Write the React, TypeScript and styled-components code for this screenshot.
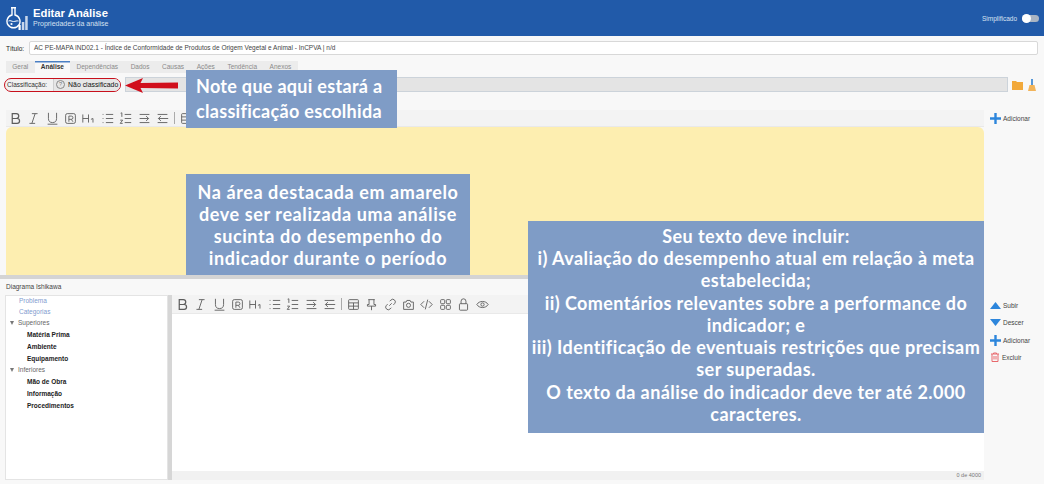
import React from "react";
import styled, { createGlobalStyle } from "styled-components";

const GlobalStyle = createGlobalStyle`
  html, body { margin: 0; padding: 0; background: #f8f8f8; }
  body { font-family: "Liberation Sans", Arial, sans-serif; overflow: hidden; }
`;

const Page = styled.div`
  position: relative;
  width: 1044px;
  height: 484px;
  overflow: hidden;
  background: #f8f8f8;
  color: #333;
`;

const Header = styled.header`
  height: 36px;
  background: #215aa9;
  display: flex;
  align-items: center;
  padding: 0 5px 0 6px;
  box-sizing: border-box;
`;

const HeaderTitles = styled.div`
  margin-left: 5px;
  flex: 1;
  color: #fff;
`;

const HeaderTitle = styled.div`
  font-size: 11.3px;
  line-height: 12px;
  font-weight: bold;
`;

const HeaderSubtitle = styled.div`
  font-size: 7px;
  line-height: 10px;
  color: #d5e0f0;
`;

const SimpleLabel = styled.span`
  color: #d9e3f2;
  font-size: 6.5px;
  margin-right: 5px;
`;

const Toggle = styled.span`
  position: relative;
  display: block;
  width: 17px;
  height: 7px;
  border-radius: 4px;
  background: #a9b4c3;
  &::after {
    content: "";
    position: absolute;
    left: 0;
    top: -1px;
    width: 9px;
    height: 9px;
    border-radius: 50%;
    background: #fff;
  }
`;

const TitleRow = styled.div`
  display: flex;
  align-items: center;
  height: 14px;
  margin: 5px 6px 0 6px;
`;

const TitleLabel = styled.span`
  font-size: 6.5px;
  width: 23px;
  color: #222;
`;

const TitleInput = styled.div`
  flex: 1;
  height: 14px;
  box-sizing: border-box;
  background: #fff;
  border: 1px solid #d8d8d8;
  border-radius: 2px;
  font-size: 6.5px;
  line-height: 12px;
  padding-left: 4px;
  color: #444;
  white-space: nowrap;
`;

const Tabs = styled.div`
  display: flex;
  height: 12px;
  margin: 6px 0 0 6px;
  width: fit-content;
  background: #ececec;
`;

const Tab = styled.span<{ $active?: boolean }>`
  flex: none;
  font-size: 6.5px;
  line-height: 12px;
  padding: 0 6.3px;
  color: ${({ $active }) => ($active ? "#333" : "#8a8a8a")};
  font-weight: ${({ $active }) => ($active ? "bold" : "normal")};
  background: ${({ $active }) => ($active ? "#f8f8f8" : "transparent")};
  box-shadow: ${({ $active }) => ($active ? "inset 0 1.5px 0 #4a7fc4" : "none")};
`;

const ClassRow = styled.div`
  display: flex;
  align-items: center;
  height: 15px;
  margin: 4px 8px 0 4px;
`;

const ClassPill = styled.div`
  display: flex;
  align-items: center;
  height: 14px;
  box-sizing: border-box;
  width: 117px;
  flex: none;
  background: #f1f1f1;
  border: 1.7px solid #c8101c;
  border-radius: 8px;
  font-size: 6.5px;
  padding-left: 2px;
`;

const ClassValue = styled.span`
  display: flex;
  align-items: center;
  gap: 3px;
  margin-left: 6px;
  padding-left: 2px;
  height: 100%;
  background: #e6e6e6;
  border-left: 1px solid #d0d0d0;
  flex: 1;
  border-radius: 0 7px 7px 0;
  color: #111;
  font-size: 6.9px;
  white-space: nowrap;
`;

const HelpMark = styled.span`
  width: 7px;
  height: 7px;
  border-radius: 50%;
  border: 1px solid #888;
  font-size: 5.5px;
  line-height: 7px;
  text-align: center;
  color: #777;
`;

const ClassField = styled.div`
  flex: 1;
  height: 15px;
  box-sizing: border-box;
  margin-left: 4px;
  background: #e4e4e4;
  border: 1px solid #ccd3da;
`;

const ClassIcons = styled.div`
  display: flex;
  align-items: center;
  gap: 5px;
  margin-left: 4px;
`;

const EditorRow = styled.div`
  display: flex;
  margin: 0 0 0 6px;
`;

const EditorColumn = styled.div`
  width: 978px;
  margin-top: 18px;
`;

const ToolbarBar = styled.div<{ $height: number; $pad: number }>`
  display: flex;
  align-items: center;
  height: ${({ $height }) => $height}px;
  padding-left: ${({ $pad }) => $pad}px;
  background: #f3f3f3;
  border-bottom: 1px solid #e9e9e9;
  box-sizing: border-box;
  color: #555;
`;

const ToolButton = styled.span`
  width: 18.45px;
  display: flex;
  justify-content: center;
  align-items: center;
  flex: none;
`;

const ToolSep = styled.span`
  width: 1px;
  height: 12px;
  margin: 0 2px;
  background: #aaa;
  flex: none;
`;

const YellowArea = styled.div`
  height: 148px;
  background: #fdeeb0;
  border-radius: 6px 6px 0 0;
`;

const SideActions = styled.div<{ $gap: number; $top: number }>`
  display: flex;
  flex-direction: column;
  gap: ${({ $gap }) => $gap}px;
  padding: ${({ $top }) => $top}px 0 0 6px;
`;

const SideAction = styled.div`
  display: flex;
  align-items: center;
  gap: 2px;
  font-size: 6.5px;
  height: 11px;
  color: #444;
`;

const Splitter = styled.div`
  height: 4px;
  margin-right: 60px;
  background: #d4d4d4;
`;

const DiagramLabel = styled.div`
  font-size: 6.5px;
  line-height: 8px;
  margin: 4px 0 0 6px;
  height: 8px;
  color: #444;
`;

const DiagramRow = styled.div`
  display: flex;
  margin: 4px 0 0 5px;
  height: 185px;
`;

const TreePanel = styled.div`
  width: 163px;
  flex: none;
  background: #fff;
  box-shadow: inset 0 0 0 1px #e4e4e4;
  box-sizing: border-box;
`;

const TreeItem = styled.div<{ $kind: "link" | "group" | "leaf" }>`
  display: flex;
  align-items: center;
  height: ${({ $kind }) => ($kind === "leaf" ? 12 : 11)}px;
  font-size: 6.5px;
  padding-left: ${({ $kind }) => ($kind === "leaf" ? 22 : $kind === "link" ? 14 : 5)}px;
  color: ${({ $kind }) => ($kind === "link" ? "#7f9dcf" : $kind === "leaf" ? "#222" : "#666")};
  font-weight: ${({ $kind }) => ($kind === "leaf" ? "bold" : "normal")};
`;

const TreeCaret = styled.span`
  width: 0;
  height: 0;
  margin-right: 4px;
  border-left: 2.5px solid transparent;
  border-right: 2.5px solid transparent;
  border-top: 4px solid #777;
`;

const Divider = styled.div`
  width: 4px;
  flex: none;
  background: #d6d6d6;
`;

const DiagramEditor = styled.div`
  width: 812px;
  flex: none;
  display: flex;
  flex-direction: column;
  background: #fff;
`;

const EditorBody = styled.div`
  flex: 1;
`;

const Counter = styled.div`
  height: 9px;
  background: #f1f1f1;
  font-size: 5.5px;
  line-height: 9px;
  text-align: right;
  padding-right: 3px;
  color: #777;
`;

const Callout = styled.div<{
  $x: number;
  $y: number;
  $w: number;
  $h: number;
  $line: number;
  $spacing: number;
  $shift?: number;
}>`
  position: absolute;
  left: ${({ $x }) => $x}px;
  top: ${({ $y }) => $y}px;
  width: ${({ $w }) => $w}px;
  height: ${({ $h }) => $h}px;
  box-sizing: border-box;
  padding-bottom: ${({ $shift }) => $shift ?? 0}px;
  background: #7f9cc6;
  color: #fff;
  font-family: Lato, sans-serif;
  font-weight: 700;
  font-size: 18px;
  line-height: ${({ $line }) => $line}px;
  letter-spacing: ${({ $spacing }) => $spacing}px;
  display: flex;
  flex-direction: column;
  justify-content: center;
`;

const CenterLine = styled.div`
  text-align: center;
  white-space: nowrap;
`;

const LeftLine = styled.div`
  padding-left: 10px;
  white-space: nowrap;
`;

const ArrowOverlay = styled.svg`
  position: absolute;
  left: 124px;
  top: 77px;
`;

const Stroke = ({ children }: { children: React.ReactNode }) => (
  <svg width="13" height="13" viewBox="0 0 16 16" fill="none" stroke="#5c5c5c" strokeWidth="1.1">
    {children}
  </svg>
);

const toolIcons: React.ReactNode[] = [
  <path key="b" d="M4 2h5a3 3 0 0 1 0 6H4zM4 8h6a3 3 0 0 1 0 6H4z" strokeWidth="1.5" />,
  <path key="i" d="M6 2h7M3 14h7M10 2 6 14" />,
  <path key="u" d="M3 1v7a5 5 0 0 0 10 0V1M2 15h12" />,
  <g key="r"><rect x="2" y="2" width="12" height="12" rx="2" /><path d="M6 12V5h3a2 2 0 0 1 0 4H6M9 9l2 3" /></g>,
  <path key="h" d="M1 3v10M8 3v10M1 8h7M11 9l2.500-1v5" />,
  <path key="ul" d="M6 3h9M6 8h9M6 13h9M2 3h1M2 8h1M2 13h1" />,
  <path key="ol" d="M7 3h8M7 8h8M7 13h8M2 1.500 3.500 1v5M1.500 10h3l-3 4h3" />,
  <path key="in" d="M2 3h12M2 13h12M2 8h11M10 5l3 3-3 3" />,
  <path key="out" d="M2 3h12M2 13h12M3 8h12M6 5 3 8l3 3" />,
];

const moreIcons: React.ReactNode[] = [
  <g key="t"><rect x="2" y="2" width="12" height="12" rx="1" /><path d="M2 6h12M8 6v8M2 10h12" /></g>,
  <path key="pin" d="M4 2h8M5 2v6H3v2h10V8h-2V2M8 10v5" />,
  <path key="link" d="M6.500 9.500l3-3M7 4l1.500-1.500a3 3 0 0 1 4.500 4.500L11.500 8.500M9 12l-1.500 1.500a3 3 0 0 1-4.500-4.500L4.500 7.500" />,
  <g key="cam"><path d="M2 5h3l1-2h4l1 2h3v9H2z" /><circle cx="8" cy="9" r="2.500" /></g>,
  <path key="code" d="M5 4 1 8l4 4M11 4l4 4-4 4M9.500 2l-3 12" />,
  <g key="grid"><rect x="2" y="2" width="5" height="5" rx="1" /><rect x="9" y="2" width="5" height="5" rx="1" /><rect x="2" y="9" width="5" height="5" rx="1" /><rect x="9" y="9" width="5" height="5" rx="1" /></g>,
  <g key="lock"><rect x="3" y="7" width="10" height="8" rx="1" /><path d="M5 7V4a3 3 0 0 1 6 0v3" /></g>,
  <g key="eye"><path d="M1 8c3-5 11-5 14 0-3 5-11 5-14 0z" /><circle cx="8" cy="8" r="2" /></g>,
];

const AddIcon = () => (
  <svg width="11" height="11" viewBox="0 0 11 11">
    <path d="M4.300 0h2.400v4.300H11v2.400H6.700V11H4.300V6.700H0V4.300h4.300z" fill="#2d86dc" />
  </svg>
);

const UpIcon = ({ down }: { down?: boolean }) => (
  <svg width="11" height="7" viewBox="0 0 11 7">
    <path d={down ? "M0 0h11L5.500 7z" : "M0 7h11L5.500 0z"} fill="#2d86dc" />
  </svg>
);

const TrashIcon = () => (
  <svg width="10" height="10" viewBox="0 0 10 10" fill="none" stroke="#e8686c" strokeWidth="1">
    <path d="M1 2h8M3.500 2V1h3v1M2 2v7.500h6V2M4 4v3.500M6 4v3.500" />
  </svg>
);

const Logo = () => (
  <svg width="22" height="23" viewBox="0 0 22 23" fill="none">
    <path d="M5 .700h5M6 .700v7.300a6.500 6.500 0 1 0 3 0V.700" stroke="#fff" strokeWidth="1.400" />
    <path d="M2.500 14c2-1 3 .5 5 .5s3-1 5-.5" stroke="#fff" strokeWidth="1" />
    <circle cx="5.500" cy="17" r="1.100" fill="#fff" />
    <rect x="12.500" y="18" width="2.200" height="5" fill="#fff" />
    <rect x="15.800" y="15" width="2.500" height="8" fill="#c9d7ec" />
    <rect x="19.200" y="9" width="2.500" height="14" fill="#c9d7ec" />
  </svg>
);

function Toolbar({ height, pad, full }: { height: number; pad: number; full?: boolean }) {
  return (
    <ToolbarBar $height={height} $pad={pad}>
      {toolIcons.map((icon, i) => (
        <ToolButton key={i}>
          <Stroke>{icon}</Stroke>
        </ToolButton>
      ))}
      <ToolSep />
      {moreIcons.slice(0, full ? moreIcons.length : 1).map((icon, i) => (
        <ToolButton key={i}>
          <Stroke>{icon}</Stroke>
        </ToolButton>
      ))}
    </ToolbarBar>
  );
}

const tabs = ["Geral", "Análise", "Dependências", "Dados", "Causas", "Ações", "Tendência", "Anexos"];

export default function App() {
  return (
    <Page>
      <GlobalStyle />
      <Header>
        <Logo />
        <HeaderTitles>
          <HeaderTitle>Editar Análise</HeaderTitle>
          <HeaderSubtitle>Propriedades da análise</HeaderSubtitle>
        </HeaderTitles>
        <SimpleLabel>Simplificado</SimpleLabel>
        <Toggle />
      </Header>

      <TitleRow>
        <TitleLabel>Título:</TitleLabel>
        <TitleInput>AC PE-MAPA IND02.1 - Índice de Conformidade de Produtos de Origem Vegetal e Animal - InCPVA | n/d</TitleInput>
      </TitleRow>

      <Tabs>
        {tabs.map((t) => (
          <Tab key={t} $active={t === "Análise"}>{t}</Tab>
        ))}
      </Tabs>

      <ClassRow>
        <ClassPill>
          Classificação:
          <ClassValue>
            <HelpMark>?</HelpMark>
            Não classificado
          </ClassValue>
        </ClassPill>
        <ClassField />
        <ClassIcons>
          <svg width="11" height="10" viewBox="0 0 11 10">
            <path d="M0 1h4l1 1h6v8H0z" fill="#f2a93b" />
          </svg>
          <svg width="8" height="12" viewBox="0 0 8 12">
            <rect x="3.200" y="0" width="1.600" height="6" fill="#2d7fd0" />
            <path d="M1.500 6h5L8 12H0z" fill="#f2b45a" />
          </svg>
        </ClassIcons>
      </ClassRow>

      <EditorRow>
        <EditorColumn>
          <Toolbar height={17} pad={0} />
          <YellowArea />
        </EditorColumn>
        <SideActions $gap={0} $top={21}>
          <SideAction>
            <AddIcon />
            Adicionar
          </SideAction>
        </SideActions>
      </EditorRow>

      <Splitter />
      <DiagramLabel>Diagrama Ishikawa</DiagramLabel>

      <DiagramRow>
        <TreePanel>
          <TreeItem $kind="link">Problema</TreeItem>
          <TreeItem $kind="link">Categorias</TreeItem>
          <TreeItem $kind="group"><TreeCaret />Superiores</TreeItem>
          <TreeItem $kind="leaf">Matéria Prima</TreeItem>
          <TreeItem $kind="leaf">Ambiente</TreeItem>
          <TreeItem $kind="leaf">Equipamento</TreeItem>
          <TreeItem $kind="group"><TreeCaret />Inferiores</TreeItem>
          <TreeItem $kind="leaf">Mão de Obra</TreeItem>
          <TreeItem $kind="leaf">Informação</TreeItem>
          <TreeItem $kind="leaf">Procedimentos</TreeItem>
        </TreePanel>
        <Divider />
        <DiagramEditor>
          <Toolbar height={19} pad={1} full />
          <EditorBody />
          <Counter>0 de 4000</Counter>
        </DiagramEditor>
        <SideActions $gap={6.3} $top={5}>
          <SideAction><UpIcon />Subir</SideAction>
          <SideAction><UpIcon down />Descer</SideAction>
          <SideAction><AddIcon />Adicionar</SideAction>
          <SideAction><TrashIcon />Excluir</SideAction>
        </SideActions>
      </DiagramRow>

      <ArrowOverlay width="56" height="18" viewBox="0 0 56 18">
        <path d="M1 8.500 19 1 16.500 6 54 5.500v6L16.500 11 19 16z" fill="#d10f1c" />
      </ArrowOverlay>

      <Callout $x={186} $y={70} $w={211} $h={58} $line={25} $spacing={0.3}>
        <LeftLine>Note que aqui estará a</LeftLine>
        <LeftLine>classificação escolhida</LeftLine>
      </Callout>

      <Callout $x={186} $y={174} $w={284} $h={101} $line={22} $spacing={0.6}>
        <CenterLine>Na área destacada em amarelo</CenterLine>
        <CenterLine>deve ser realizada uma análise</CenterLine>
        <CenterLine>sucinta do desempenho do</CenterLine>
        <CenterLine>indicador durante o período</CenterLine>
      </Callout>

      <Callout $x={528} $y={221} $w={456} $h={212} $line={22.2} $spacing={0.43} $shift={4}>
        <CenterLine>Seu texto deve incluir:</CenterLine>
        <CenterLine>i) Avaliação do desempenho atual em relação à meta</CenterLine>
        <CenterLine>estabelecida;</CenterLine>
        <CenterLine>ii) Comentários relevantes sobre a performance do</CenterLine>
        <CenterLine>indicador; e</CenterLine>
        <CenterLine>iii) Identificação de eventuais restrições que precisam</CenterLine>
        <CenterLine>ser superadas.</CenterLine>
        <CenterLine>O texto da análise do indicador deve ter até 2.000</CenterLine>
        <CenterLine>caracteres.</CenterLine>
      </Callout>
    </Page>
  );
}
